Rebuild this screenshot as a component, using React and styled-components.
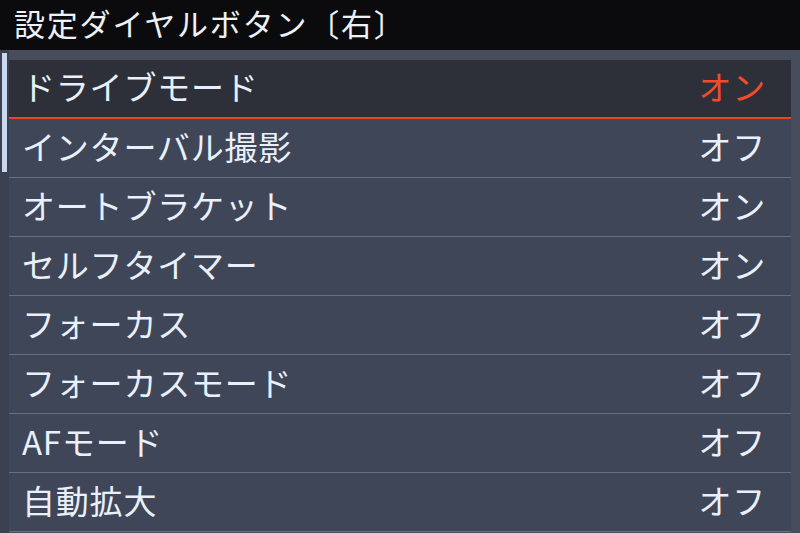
import React from "react";
import styled, { createGlobalStyle } from "styled-components";

const GlobalStyle = createGlobalStyle`
  html, body {
    margin: 0;
    padding: 0;
    background: #0b0b0d;
  }
  body {
    font-family: "Noto Sans CJK JP", "Noto Sans", sans-serif;
  }
`;

const Screen = styled.div`
  width: 800px;
  height: 533px;
  overflow: hidden;
  display: flex;
  flex-direction: column;
  background: #0b0b0d;
`;

const Header = styled.div`
  height: 50px;
  box-sizing: border-box;
  padding: 0 0 5px 14px;
  display: flex;
  align-items: center;
  color: #eef2f8;
  font-size: 31px;
  letter-spacing: 1.8px;
  line-height: 1;
`;

const Panel = styled.div`
  flex: 1;
  display: flex;
  background: #474d5c;
`;

const ScrollTrack = styled.div`
  width: 9px;
  padding: 3px 2px 0 2px;
  box-sizing: border-box;
  background: #3b4150;
`;

const ScrollThumb = styled.div`
  width: 5px;
  height: 119px;
  background: #c9d8ef;
`;

const List = styled.div`
  flex: 1;
  display: flex;
  flex-direction: column;
  padding-top: 10px;
  margin-right: 9px;
`;

const Row = styled.div`
  height: 59px;
  box-sizing: border-box;
  display: flex;
  align-items: center;
  justify-content: space-between;
  padding: 0 25px 4px 13px;
  background: ${(p) => (p.$active ? "#2d3038" : "#3f4658")};
  border-bottom: ${(p) => (p.$active ? "2px solid #e8442c" : "1px solid #657086")};
  font-size: 33px;
  letter-spacing: 0.8px;
  line-height: 1;
  color: #e9f0fb;
`;

const Value = styled.span`
  color: ${(p) => (p.$active ? "#f24b2c" : "#e9f0fb")};
`;

const items = [
  { label: "ドライブモード", value: "オン" },
  { label: "インターバル撮影", value: "オフ" },
  { label: "オートブラケット", value: "オン" },
  { label: "セルフタイマー", value: "オン" },
  { label: "フォーカス", value: "オフ" },
  { label: "フォーカスモード", value: "オフ" },
  { label: "AFモード", value: "オフ" },
  { label: "自動拡大", value: "オフ" },
];

export default function App() {
  return (
    <>
      <GlobalStyle />
      <Screen>
        <Header>設定ダイヤルボタン〔右〕</Header>
        <Panel>
          <ScrollTrack>
            <ScrollThumb />
          </ScrollTrack>
          <List>
            {items.map((item, i) => (
              <Row key={item.label} $active={i === 0}>
                <span>{item.label}</span>
                <Value $active={i === 0}>{item.value}</Value>
              </Row>
            ))}
          </List>
        </Panel>
      </Screen>
    </>
  );
}
